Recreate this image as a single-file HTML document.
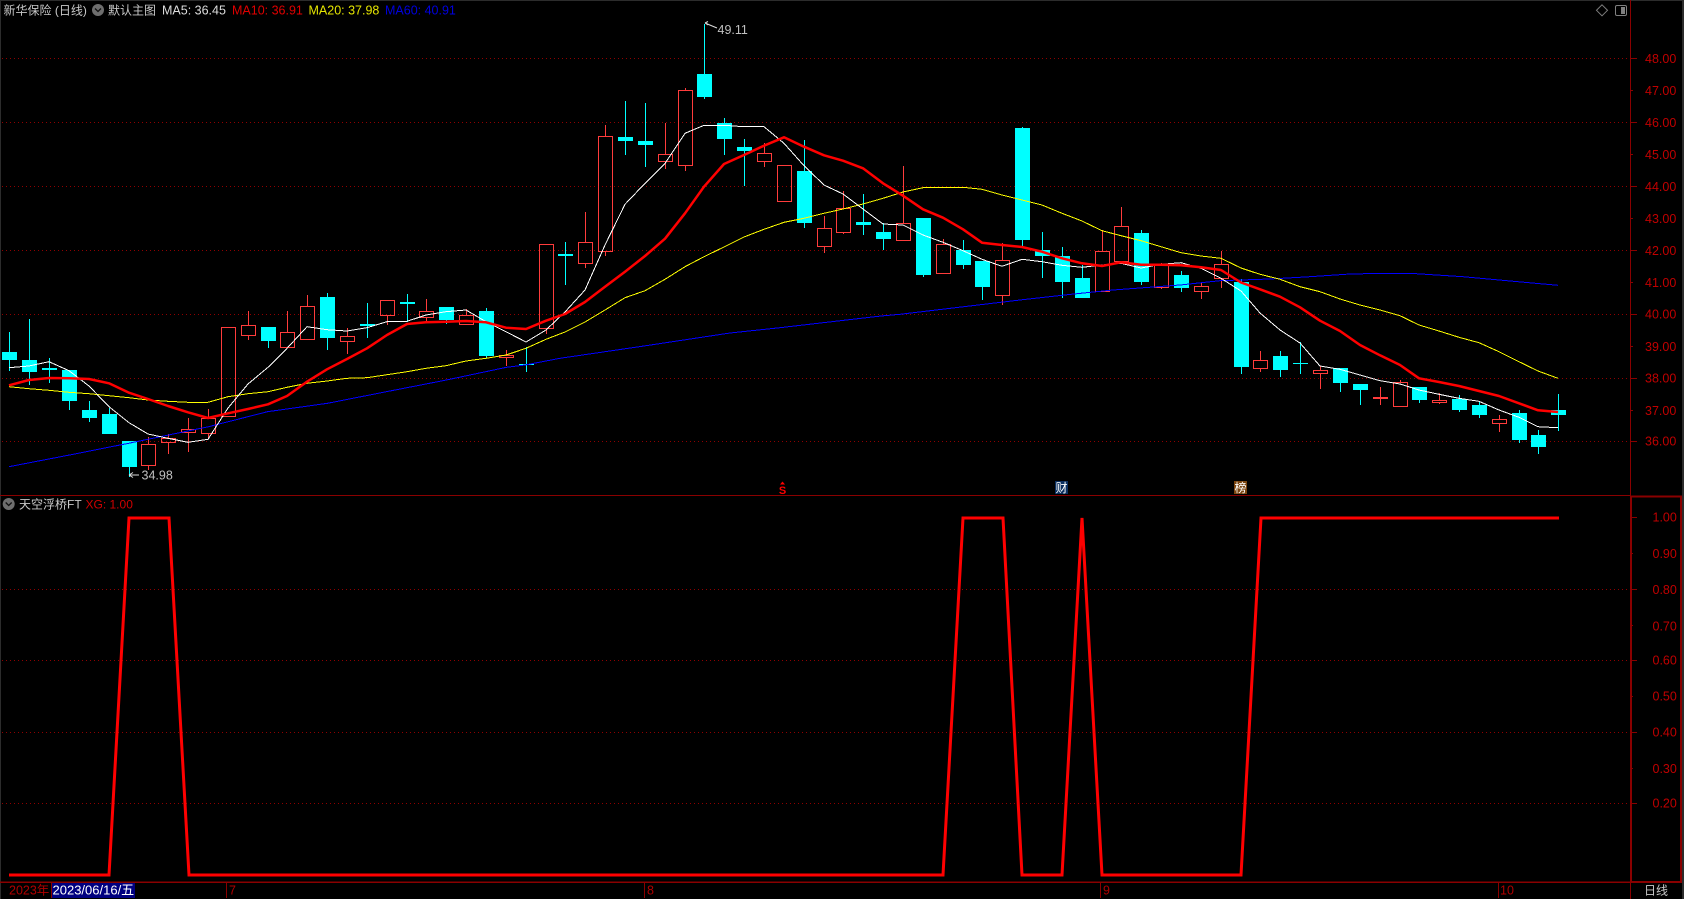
<!DOCTYPE html>
<html lang="zh"><head><meta charset="utf-8"><title>新华保险 (日线)</title>
<style>
html,body{margin:0;padding:0;background:#000;width:1684px;height:899px;overflow:hidden}
svg{display:block}
text{font-family:"Liberation Sans","Noto Sans CJK SC",sans-serif;font-size:12.5px;white-space:pre}
.ax text{fill:#c00000;font-size:12.5px}
</style></head><body>
<svg width="1684" height="899" viewBox="0 0 1684 899" xmlns="http://www.w3.org/2000/svg">
<rect width="1684" height="899" fill="#000"/>
<!-- frame -->
<rect x="0" y="0" width="1684" height="1" fill="#2c2c2c"/>
<rect x="0" y="0" width="1" height="899" fill="#2c2c2c"/>
<rect x="1682" y="0" width="2" height="899" fill="#2c2c2c"/>
<!-- grids -->
<g stroke="#900000" stroke-width="1" stroke-dasharray="1 3" shape-rendering="crispEdges" fill="none">
<path d="M2 58.5H1628M2 122.5H1628M2 186.5H1628M2 250.5H1628M2 314.5H1628M2 378.5H1628M2 441.5H1628"/>
<path d="M2 589.5H1628M2 660.5H1628M2 732.5H1628M2 803.5H1628"/>
</g>
<!-- axes -->
<g stroke="#8a0000" fill="none" shape-rendering="crispEdges">
<path d="M1630.5 0V899" stroke-width="1"/>
<path d="M0 495.5H1630" stroke-width="1"/>
<path d="M0 882H1631" stroke-width="1.5"/>
<path d="M1631 496.5H1681V882H1631Z" stroke-width="2"/>
<path d="M51.5 883V898M226.5 883V898M644.5 883V898M1100.5 883V898M1498.5 883V898" stroke-width="1"/>
<path d="M1631 58.5h6M1631 90.5h2M1631 122.5h6M1631 154.5h2M1631 186.5h6M1631 218.5h2M1631 250.5h6M1631 282.5h2M1631 314.5h6M1631 346.5h2M1631 378.5h6M1631 410.5h2M1631 441.5h6" stroke-width="1"/>
<path d="M1631 517.5h6M1631 553.5h2M1631 589.5h6M1631 625.5h2M1631 660.5h6M1631 696.5h2M1631 732.5h6M1631 768.5h2M1631 803.5h6" stroke-width="1"/>
</g>
<!-- cyan candles -->
<path fill="none" stroke="#00ffff" stroke-width="1" shape-rendering="crispEdges" d="M9.5 332V371M29.5 319V385M49.5 358V383M69.5 370V410M89.5 401V422M109.5 408V434M129.5 441V477M268.5 327V348M327.5 293V350M367.5 303V338M407.5 294V322M446.5 307V324M486.5 308V358M526.5 347V372M565.5 242V285M625.5 101V155M645.5 103V167M704.5 24V99M724.5 118V155M744.5 139V186M804.5 140V228M863.5 194V235M883.5 223V250M923.5 218V277M963.5 240V269M982.5 261V300M1022.5 127V246M1042.5 232V278M1062.5 247V298M1082.5 265V298M1141.5 230V285M1181.5 271V292M1241.5 279V374M1280.5 351V377M1300.5 342V374M1340.5 368V392M1360.5 384V405M1419.5 387V403M1459.5 395V412M1479.5 402V418M1519.5 410V443M1538.5 430V454M1558.5 394V431"/>
<path fill="#00ffff" shape-rendering="crispEdges" d="M2 352h15V360h-15zM22 360h15V372h-15zM42 368h15V370h-15zM62 370h15V401h-15zM82 410h15V418h-15zM102 414h15V434h-15zM122 441h15V467h-15zM261 327h15V341h-15zM320 297h15V338h-15zM360 324h15V326h-15zM400 302h15V304h-15zM439 307h15V320h-15zM479 311h15V356h-15zM519 364h15V365h-15zM558 254h15V256h-15zM618 137h15V141h-15zM638 141h15V145h-15zM697 74h15V97h-15zM717 123h15V139h-15zM737 147h15V151h-15zM797 171h15V223h-15zM856 222h15V225h-15zM876 232h15V239h-15zM916 218h15V275h-15zM956 250h15V265h-15zM975 261h15V287h-15zM1015 128h15V240h-15zM1035 250h15V256h-15zM1055 256h15V282h-15zM1075 278h15V298h-15zM1134 233h15V282h-15zM1174 275h15V288h-15zM1234 282h15V367h-15zM1273 356h15V370h-15zM1293 363h15V364h-15zM1333 368h15V383h-15zM1353 384h15V390h-15zM1412 387h15V400h-15zM1452 399h15V410h-15zM1472 405h15V415h-15zM1512 413h15V440h-15zM1531 435h15V447h-15zM1551 410h15V415h-15z"/>
<!-- red candles -->
<path fill="none" stroke="#ff3c3c" stroke-width="1" shape-rendering="crispEdges" d="M148.5 437V444M148.5 465V470M168.5 434V438M168.5 442V454M188.5 418V429M188.5 432V452M208.5 409V418M208.5 433V438M248.5 311V325M248.5 335V340M287.5 311V332M307.5 295V306M347.5 328V336M347.5 341V354M387.5 315V325M426.5 299V311M426.5 317V322M466.5 309V315M466.5 324V325M506.5 350V355M506.5 357V366M546.5 328V334M585.5 212V242M585.5 263V268M605.5 125V136M605.5 251V256M665.5 123V154M665.5 161V169M685.5 88V90M685.5 165V171M764.5 143V153M764.5 161V167M824.5 216V228M824.5 246V253M843.5 191V208M843.5 232V234M903.5 166V223M943.5 239V244M1002.5 243V260M1002.5 295V305M1102.5 230V251M1121.5 207V226M1121.5 261V262M1161.5 263V265M1161.5 287V289M1201.5 283V286M1201.5 291V299M1221.5 251V264M1221.5 278V288M1260.5 351V360M1260.5 368V372M1320.5 366V370M1320.5 373V389M1380.5 387V397M1380.5 398V405M1400.5 380V382M1439.5 393V400M1439.5 402V404M1499.5 415V419M1499.5 423V432"/>
<path fill="none" stroke="#ff3c3c" stroke-width="1" shape-rendering="crispEdges" d="M141.500 444.500h14V465.500h-14zM161.500 438.500h14V442.500h-14zM181.500 429.500h14V432.500h-14zM201.500 418.500h14V433.500h-14zM221.500 327.500h14V416.500h-14zM241.500 325.500h14V335.500h-14zM280.500 332.500h14V347.500h-14zM300.500 306.500h14V339.500h-14zM340.500 336.500h14V341.500h-14zM380.500 300.500h14V315.500h-14zM419.500 311.500h14V317.500h-14zM459.500 315.500h14V324.500h-14zM499.500 355.500h14V357.500h-14zM539.500 244.500h14V328.500h-14zM578.500 242.500h14V263.500h-14zM598.500 136.500h14V251.500h-14zM658.500 154.500h14V161.500h-14zM678.500 90.500h14V165.500h-14zM757.500 153.500h14V161.500h-14zM777.500 165.500h14V201.500h-14zM817.500 228.500h14V246.500h-14zM836.500 208.500h14V232.500h-14zM896.500 223.500h14V240.500h-14zM936.500 244.500h14V273.500h-14zM995.500 260.500h14V295.500h-14zM1095.500 251.500h14V291.500h-14zM1114.500 226.500h14V261.500h-14zM1154.500 265.500h14V287.500h-14zM1194.500 286.500h14V291.500h-14zM1214.500 264.500h14V278.500h-14zM1253.500 360.500h14V368.500h-14zM1313.500 370.500h14V373.500h-14zM1373.500 397.500h14V398.500h-14zM1393.500 382.500h14V406.500h-14zM1432.500 400.500h14V402.500h-14zM1492.500 419.500h14V423.500h-14z"/>
<!-- MA60 -->
<polyline fill="none" stroke="#0000ff" stroke-width="1" shape-rendering="crispEdges" points="9,466.7 69.6,455 128.6,443.3 208.6,426.7 267.5,411.7 327.5,403.3 386.4,391.7 446.4,380 506.4,367.3 525,365 560,358.3 644,346 730,333 780,327.7 881,316 900,314.3 1020,300 1074,294 1113,290 1180,285 1220,280.7 1270,279 1310,276.7 1350,274 1387,273.3 1410,273.3 1463,276.7 1510,281 1558,285.3"/>
<!-- MA20 -->
<polyline fill="none" stroke="#ffff00" stroke-width="1" shape-rendering="crispEdges" points="9,386.7 29,388.7 49,390.3 69,392.3 89,393.7 109,395.7 129,397.7 148,400 168,401.3 188,402.3 208,402.3 228,396.7 248,393.7 268,391.7 287,387.3 307,383.3 327,381 347,378.3 367,377.7 387,374.7 407,371.7 426,368.3 446,365.7 466,361 486,358.3 506,355 526,348.3 546,339.3 565,332 585,322 605,310 625,297.7 645,290.7 665,279.3 685,266.7 704,256.7 724,247 744,237 764,229.3 784,222.3 804,218.3 824,213.3 843,209 863,204 883,198.3 903,192 923,187.7 943,187.3 963,187.3 982,189.3 1002,195 1022,200 1042,205 1062,213.3 1082,221 1102,230.7 1121,235.7 1141,240.7 1161,246.7 1181,252.7 1201,256 1221,258.3 1241,268 1260,274.3 1280,279.3 1300,286.7 1320,291.7 1340,299 1360,305 1380,310 1400,315.7 1419,325 1439,331 1459,337.3 1479,342.7 1499,351.7 1519,361.7 1538,371 1558,378.3"/>
<!-- MA5 -->
<polyline fill="none" stroke="#ffffff" stroke-width="1" shape-rendering="crispEdges" points="9,367.7 29,366 49,361.7 69,370.7 89,386 109,406.7 129,422.7 148,434 168,438.3 188,442.3 208,439.3 228,408 248,384 268,367.3 287,348.3 307,326.7 327,329.7 347,331 367,327.7 387,321.7 407,321.3 426,315 446,311.7 466,310 486,321.7 506,331.7 526,342 546,330 565,312 585,290 605,245 625,204.3 645,183.3 665,163.3 685,133.3 704,125.3 724,125.3 744,126.7 764,126.7 784,143.3 804,165.7 824,185 843,194 863,209 883,224 903,225 923,235 943,242.3 963,250.7 982,259.3 1002,266.3 1022,259.3 1042,261.7 1062,265.3 1082,267.3 1102,265 1121,263.3 1141,268 1161,264.3 1181,262.7 1201,268.3 1221,278.3 1241,291 1260,313 1280,330 1300,343 1320,366 1340,369.3 1360,375 1380,380.7 1400,384 1419,390 1439,394.3 1459,398.3 1479,401.3 1499,410 1519,417.3 1538,426.7 1558,427.7"/>
<!-- MA10 -->
<polyline fill="none" stroke="#ff0000" stroke-width="2.5" stroke-linejoin="round" points="9,385.3 29,380 49,378 69,378.3 89,379 109,383.3 129,392.7 148,399 168,406 188,412.3 208,418 228,413.3 248,409 268,404.3 287,396 307,381.7 327,369.3 347,359 367,348.3 387,335 407,324 426,322.3 446,321.7 466,321 486,322.3 506,327.7 526,329 546,320.7 565,314 585,302 605,286.7 625,271.7 645,256 665,238.7 685,213.3 704,186.7 724,164 744,155 764,145.7 784,137.3 804,146.7 824,155.3 843,160.7 863,168.3 883,183.3 903,195.7 923,209.3 943,217.7 963,229.3 982,242.7 1002,245 1022,247 1042,251.7 1062,258.3 1082,263.3 1102,266 1121,262.3 1141,264.7 1161,264.7 1181,265.3 1201,267.3 1221,270 1241,282.5 1260,289.3 1280,296.7 1300,307.3 1320,320.7 1340,331 1360,345 1380,355.3 1400,365 1419,378.3 1439,382 1459,386 1479,391 1499,396 1519,403.3 1538,410.3 1558,412"/>
<!-- indicator line -->
<polyline fill="none" stroke="#ff0000" stroke-width="3" stroke-linejoin="miter" points="9,875 109,875 129,518 169,518 189,875 943,875 963,518 1003,518 1022,875 1062,875 1082,518 1102,875 1241,875 1261,518 1559,518"/>
<!-- annotations -->
<path d="M129 475h10M129 475l4-2.500M129 475l4 2.500" stroke="#dddddd" stroke-width="1" fill="none"/>
<text x="141.500" y="479.500" fill="#c0c0c0">34.98</text>
<path d="M705 23l12 5M705 23l3 -1.500M705 23l3 2" stroke="#dddddd" stroke-width="1" fill="none"/>
<text x="717.500" y="34" fill="#c0c0c0">49.11</text>
<!-- markers -->
<text x="782.500" y="494" fill="#ff0000" text-anchor="middle" style="font-size:11px;font-weight:bold">S</text>
<path d="M780 484.500l2.500-3 2.500 3z" fill="#ff0000"/>
<rect x="1055" y="481" width="13" height="13" fill="#0b2f5f"/>
<text x="1061.500" y="492" fill="#ffffff" text-anchor="middle" style="font-size:12px">财</text>
<rect x="1234" y="481" width="13" height="13" fill="#7a4510"/>
<text x="1240.500" y="492" fill="#ffffff" text-anchor="middle" style="font-size:12px">榜</text>
<!-- header -->
<text x="3.500" y="14.500" fill="#c8c8c8" style="font-size:12px">新华保险 (日线)</text>
<circle cx="98" cy="10" r="6" fill="#6e6e6e"/>
<path d="M95 8.500l3 3 3-3" stroke="#111" stroke-width="1.300" fill="none"/>
<text x="108" y="14.500" fill="#c8c8c8" style="font-size:12px">默认主图</text>
<text x="162" y="14.500" fill="#dddddd">MA5: 36.45</text>
<text x="232" y="14.500" fill="#e00000">MA10: 36.91</text>
<text x="308.500" y="14.500" fill="#e6e600">MA20: 37.98</text>
<text x="385" y="14.500" fill="#0000e0">MA60: 40.91</text>
<!-- top right icons -->
<path d="M1602 4.800l5.500 5.500-5.500 5.500-5.500-5.500z" fill="none" stroke="#808080"/>
<rect x="1615.500" y="5.500" width="11" height="10" rx="1.500" fill="none" stroke="#808080"/>
<rect x="1621" y="7" width="4" height="7" fill="#808080"/>
<!-- sub panel header -->
<circle cx="8.700" cy="504" r="6" fill="#6e6e6e"/>
<path d="M5.700 502.500l3 3 3-3" stroke="#111" stroke-width="1.300" fill="none"/>
<text x="19" y="508.500" fill="#c8c8c8" style="font-size:12px">天空浮桥FT</text>
<text x="85.500" y="508.500" fill="#d00000" style="font-size:12px">XG: 1.00</text>
<!-- axis labels -->
<g class="ax">
<text x="1645" y="63">48.00</text>
<text x="1645" y="95">47.00</text>
<text x="1645" y="127">46.00</text>
<text x="1645" y="159">45.00</text>
<text x="1645" y="191">44.00</text>
<text x="1645" y="223">43.00</text>
<text x="1645" y="255">42.00</text>
<text x="1645" y="287">41.00</text>
<text x="1645" y="318.500">40.00</text>
<text x="1645" y="351">39.00</text>
<text x="1645" y="382.500">38.00</text>
<text x="1645" y="415">37.00</text>
<text x="1645" y="445.500">36.00</text>
<text x="1652.500" y="521.500">1.00</text>
<text x="1652.500" y="558">0.90</text>
<text x="1652.500" y="594">0.80</text>
<text x="1652.500" y="630.500">0.70</text>
<text x="1652.500" y="664.500">0.60</text>
<text x="1652.500" y="700.500">0.50</text>
<text x="1652.500" y="736.500">0.40</text>
<text x="1652.500" y="773">0.30</text>
<text x="1652.500" y="807.500">0.20</text>
</g>
<!-- date row -->
<text x="9" y="894.500" fill="#b00000">2023年</text>
<rect x="52" y="883" width="83" height="15" fill="#000080"/>
<text x="52.500" y="894.500" fill="#ffffff" style="font-size:13px">2023/06/16/五</text>
<text x="229" y="894.500" fill="#b00000">7</text>
<text x="647" y="894.500" fill="#b00000">8</text>
<text x="1103" y="894.500" fill="#b00000">9</text>
<text x="1500" y="894.500" fill="#b00000">10</text>
<text x="1644" y="894.500" fill="#c8c8c8" style="font-size:12px">日线</text>
</svg>
</body></html>
